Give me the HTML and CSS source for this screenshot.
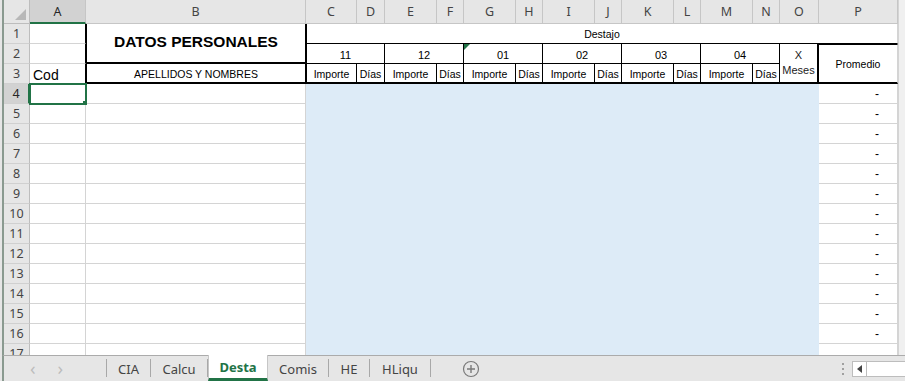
FILE: index.html
```html
<!DOCTYPE html>
<html lang="es">

<head>
  <meta charset="UTF-8">
  <meta name="viewport" content="width=device-width, initial-scale=1">
  <title>Desta</title>
  <link rel="stylesheet" href="styles.css">
</head>

<body>
  <div class="window">
    <div class="sheet-area">
      <div class="edge"></div>

      <div class="sheet" id="sheet">
        <!-- column headers -->
        <div class="corner"><span class="corner-tri"></span></div>
        <div class="colhead selected">A</div>
        <div class="colhead">B</div>
        <div class="colhead">C</div>
        <div class="colhead">D</div>
        <div class="colhead">E</div>
        <div class="colhead">F</div>
        <div class="colhead">G</div>
        <div class="colhead">H</div>
        <div class="colhead">I</div>
        <div class="colhead">J</div>
        <div class="colhead">K</div>
        <div class="colhead">L</div>
        <div class="colhead">M</div>
        <div class="colhead">N</div>
        <div class="colhead">O</div>
        <div class="colhead">P</div>

        <!-- row 1 -->
        <div class="rowhead">1</div>
        <div class="cell a-edge"></div>
        <div class="cell title">DATOS PERSONALES</div>
        <div class="cell destajo">Destajo</div>

        <!-- row 2 -->
        <div class="rowhead">2</div>
        <div class="cell a-edge"></div>
        <div class="cell month first">11</div>
        <div class="cell month">12</div>
        <div class="cell month">
          <span class="flag"></span>01
        </div>
        <div class="cell month">02</div>
        <div class="cell month">03</div>
        <div class="cell month">04</div>
        <div class="cell meses">X<br>Meses</div>
        <div class="cell promedio">Promedio</div>

        <!-- row 3 -->
        <div class="rowhead">3</div>
        <div class="cell a-edge cod">Cod</div>
        <div class="cell names">APELLIDOS Y NOMBRES</div>
        <div class="cell sub first">Importe</div>
        <div class="cell sub">Días</div>
        <div class="cell sub">Importe</div>
        <div class="cell sub">Días</div>
        <div class="cell sub">Importe</div>
        <div class="cell sub">Días</div>
        <div class="cell sub">Importe</div>
        <div class="cell sub">Días</div>
        <div class="cell sub">Importe</div>
        <div class="cell sub">Días</div>
        <div class="cell sub">Importe</div>
        <div class="cell sub">Días</div>
      </div>

      <div class="vscroll"></div>
    </div>

    <div class="tabbar">
      <div class="nav">
        <span class="arrow">&#x2039;</span>
        <span class="arrow">&#x203A;</span>
      </div>
      <div class="tabs">
        <div class="tab">CIA</div>
        <div class="tab">Calcu</div>
        <div class="tab active">Desta</div>
        <div class="tab">Comis</div>
        <div class="tab">HE</div>
        <div class="tab">HLiqu</div>
      </div>
      <div class="add">
        <svg width="18" height="18" viewBox="0 0 18 18">
          <circle cx="9" cy="9" r="7.5" fill="none" stroke="#7a7a7a" stroke-width="1.2"/>
          <path d="M9 5v8M5 9h8" stroke="#7a7a7a" stroke-width="1.4"/>
        </svg>
      </div>
      <div class="spacer"></div>
      <div class="grip"><span></span><span></span><span></span></div>
      <div class="hscroll">
        <div class="hbtn">
          <svg width="6" height="8" viewBox="0 0 6 8"><path d="M5 0v8L0 4z" fill="#444"/></svg>
        </div>
        <div class="htrack"></div>
      </div>
    </div>
  </div>

  <script>
    // data rows 4..17 (row 17 is cut off by the tab bar)
    const sheet = document.getElementById('sheet');
    for (let r = 4; r <= 17; r++) {
      const head = document.createElement('div');
      head.className = 'rowhead' + (r === 4 ? ' selected' : '');
      head.textContent = r;
      sheet.appendChild(head);

      const a = document.createElement('div');
      a.className = 'cell' + (r === 4 ? ' active-cell' : '');
      sheet.appendChild(a);

      const b = document.createElement('div');
      b.className = 'cell';
      sheet.appendChild(b);

      const fill = document.createElement('div');
      fill.className = 'fill';
      sheet.appendChild(fill);

      const p = document.createElement('div');
      p.className = 'cell dash';
      if (r < 17) p.textContent = '-';
      sheet.appendChild(p);
    }
  </script>
</body>

</html>
```

FILE: styles.css
```css
* {
  box-sizing: border-box;
}

body {
  margin: 0;
  font-family: "Liberation Sans", Arial, sans-serif;
  background: #e6e6e6;
}

.window {
  width: 905px;
  height: 381px;
  display: flex;
  flex-direction: column;
  overflow: hidden;
}

.sheet-area {
  height: 355px;
  display: flex;
  overflow: hidden;
  background: #fff;
}

.edge {
  width: 4px;
  flex: none;
  background: #e6e6e6;
  border-right: 2px solid #8a9a90;
}

.sheet {
  display: grid;
  grid-template-columns: 26px 56px 220px 51px 28px 52px 27px 52px 27px 52px 27px 52px 27px 52px 27px 39px 79px;
  grid-template-rows: 24px repeat(17, 20px);
  flex: none;
  font-size: 12px;
  color: #000;
}

.vscroll {
  flex: 1;
  background: #f0f0f0;
  border-left: 1px solid #d4d4d4;
}

/* headers */
.corner {
  background: #e6e6e6;
  border-right: 1px solid #bdbdbd;
  border-bottom: 1px solid #bdbdbd;
  display: flex;
  align-items: flex-end;
  justify-content: flex-end;
  padding: 0 3px 3px 0;
}

.corner-tri {
  width: 0;
  height: 0;
  border-left: 11px solid transparent;
  border-bottom: 11px solid #b8b8b8;
}

.colhead,
.rowhead {
  background: #e6e6e6;
  color: #444;
  font-family: "Noto Sans", "Open Sans", sans-serif;
  font-size: 12.5px;
  display: flex;
  align-items: center;
  justify-content: center;
  border-right: 1px solid #c6c6c6;
  border-bottom: 1px solid #c6c6c6;
}

.colhead.selected {
  background: #d2d2d2;
  color: #262626;
  border-bottom: 2px solid #217346;
}

.rowhead {
  border-right: 1px solid #bdbdbd;
  border-bottom: 1px solid #d0d0d0;
}

.rowhead.selected {
  background: #d2d2d2;
  color: #262626;
  border-right: 2px solid #217346;
}

/* cells */
.cell {
  border-right: 1px solid #d4d4d4;
  border-bottom: 1px solid #d4d4d4;
  background: #fff;
  display: flex;
  align-items: center;
  justify-content: center;
  white-space: nowrap;
  overflow: hidden;
}

.a-edge {
  border-right: 1px solid #000;
}

.cod {
  justify-content: flex-start;
  padding-left: 3px;
  font-size: 14px;
  padding-top: 3px;
}

.title {
  grid-row: span 2;
  border-left: 1px solid #000;
  border-right: 1px solid #000;
  border-bottom: 2px solid #000;
  font-weight: bold;
  font-size: 15.5px;
  padding-bottom: 2px;
}

.names {
  border-left: 1px solid #000;
  border-right: 1px solid #000;
  border-bottom: 2px solid #000;
  font-size: 10.5px;
  padding-top: 2px;
}

.destajo {
  grid-column: span 14;
  border-left: 1px solid #000;
  border-bottom: 1px solid #000;
  font-size: 10.5px;
}

.month {
  grid-column: span 2;
  border-right: 1px solid #000;
  border-bottom: 1px solid #000;
  font-size: 11px;
  position: relative;
  padding-top: 2px;
}

.first {
  border-left: 1px solid #000;
}

.flag {
  position: absolute;
  left: 0;
  top: 0;
  width: 0;
  height: 0;
  border-top: 6px solid #217346;
  border-right: 6px solid transparent;
}

.meses {
  grid-row: span 2;
  border-right: 2px solid #000;
  border-bottom: 2px solid #000;
  font-size: 11px;
  line-height: 15px;
  text-align: center;
  white-space: normal;
  color: #222;
}

.promedio {
  grid-row: span 2;
  border-top: 1px solid #000;
  border-bottom: 2px solid #000;
  font-size: 10.5px;
}

.sub {
  border-right: 1px solid #000;
  border-bottom: 2px solid #000;
  font-size: 10.5px;
  padding-top: 1px;
}

.fill {
  grid-column: span 13;
  background: #ddebf7;
}

.dash {
  justify-content: flex-end;
  padding-right: 18px;
  font-size: 12px;
}

.active-cell {
  position: relative;
  outline: 2px solid #217346;
  outline-offset: -1px;
  z-index: 1;
}

.active-cell::after {
  content: "";
  position: absolute;
  right: -4px;
  bottom: -4px;
  width: 5px;
  height: 5px;
  background: #217346;
  border: 1px solid #fff;
}

/* sheet tabs */
.tabbar {
  height: 26px;
  display: flex;
  align-items: stretch;
  background: #e6e6e6;
  border-top: 1px solid #ababab;
  border-left: 2px solid #8a9a90;
  margin-left: 2px;
  font-family: "Noto Sans", "Open Sans", sans-serif;
  font-size: 13px;
  color: #444;
}

.nav {
  width: 103px;
  display: flex;
  align-items: center;
  gap: 22px;
  padding-left: 26px;
  color: #bcbcbc;
  font-size: 18px;
  border-right: 1px solid #a8a8a8;
  margin: 3px 0 4px;
}

.tabs {
  display: flex;
}

.tab {
  display: flex;
  align-items: center;
  justify-content: center;
  border-right: 1px solid #a8a8a8;
  margin: 3px 0 4px;
  padding-top: 1px;
}

.tab:nth-child(1) { width: 44px; }
.tab:nth-child(2) { width: 57px; }
.tab:nth-child(3) { width: 60px; }
.tab:nth-child(4) { width: 61px; }
.tab:nth-child(5) { width: 41px; }
.tab:nth-child(6) { width: 61px; }

.tab.active {
  background: #fff;
  color: #217346;
  font-weight: bold;
  margin: -1px 0 0;
  border-right: 1px solid #c6c6c6;
  border-left: 1px solid #c6c6c6;
  border-bottom: 3px solid #217346;
  padding-top: 0;
}

.add {
  width: 80px;
  display: flex;
  align-items: center;
  justify-content: center;
}

.spacer {
  flex: 1;
}

.grip {
  width: 14px;
  display: flex;
  flex-direction: column;
  align-items: center;
  justify-content: center;
  gap: 3px;
}

.grip span {
  width: 2px;
  height: 2px;
  background: #a0a0a0;
}

.hscroll {
  width: 55px;
  display: flex;
  align-items: center;
  padding-left: 2px;
}

.hbtn {
  width: 15px;
  height: 16px;
  background: #fff;
  border: 1px solid #bdbdbd;
  display: flex;
  align-items: center;
  justify-content: center;
}

.htrack {
  flex: 1;
  height: 16px;
  background: #fff;
  border-top: 1px solid #bdbdbd;
  border-bottom: 1px solid #bdbdbd;
}
```
